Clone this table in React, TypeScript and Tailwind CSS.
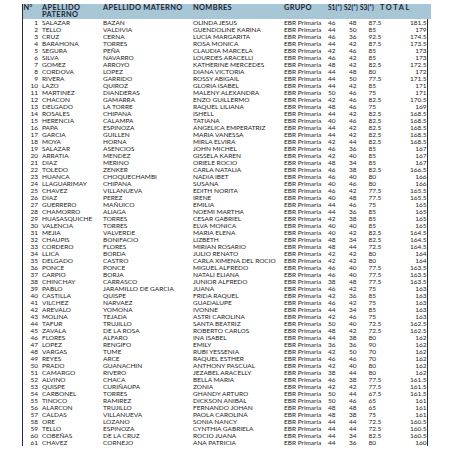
import React from "react";

type Row = [number, string, string, string, string, string, string, string];

const D: Row[] = [
  [1, "SALAZAR", "BAZAN", "OLINDA JESUS", "46", "48", "87.5", "181.5"],
  [2, "TELLO", "VALDIVIA", "GUENDOLINE KARINA", "44", "50", "85", "179"],
  [3, "CRUZ", "CERNA", "LUCIA MARGARITA", "46", "36", "92.5", "174.5"],
  [4, "BARAHONA", "TORRES", "ROSA MONICA", "44", "42", "87.5", "173.5"],
  [5, "SEGURA", "PEÑA", "CLAUDIA MARCELA", "42", "46", "85", "173"],
  [6, "SILVA", "NAVARRO", "LOURDES ARACELLI", "46", "42", "85", "173"],
  [7, "GOMEZ", "ARROYO", "KATHERINE MERCEDES", "48", "42", "82.5", "172.5"],
  [8, "CORDOVA", "LOPEZ", "DIANA VICTORIA", "44", "48", "80", "172"],
  [9, "RIVERA", "GARRIDO", "ROSSY ABIGAIL", "44", "50", "77.5", "171.5"],
  [10, "LAZO", "QUIROZ", "GLORIA ISABEL", "44", "42", "85", "171"],
  [11, "MARTINEZ", "DIANDERAS", "MALENY ALEXANDRA", "50", "46", "75", "171"],
  [12, "CHACON", "GAMARRA", "ENZO GUILLERMO", "42", "46", "82.5", "170.5"],
  [13, "DELGADO", "LA TORRE", "RAQUEL LILIANA", "48", "46", "75", "169"],
  [14, "ROSALES", "CHIPANA", "ISHELL", "44", "42", "82.5", "168.5"],
  [15, "HERENCIA", "CALAMPA", "TATIANA", "40", "46", "82.5", "168.5"],
  [16, "PAPA", "ESPINOZA", "ANGELICA EMPERATRIZ", "44", "42", "82.5", "168.5"],
  [17, "GARCIA", "GUILLEN", "MARIA VANESSA", "44", "42", "82.5", "168.5"],
  [18, "MOYA", "HORNA", "MIRLA ELVIRA", "42", "44", "82.5", "168.5"],
  [19, "SALAZAR", "ASENCIOS", "JOHN MICHEL", "46", "36", "85", "167"],
  [20, "ARRATIA", "MENDEZ", "GISSELA KAREN", "42", "40", "85", "167"],
  [21, "DIAZ", "MERINO", "ORIELE ROCIO", "48", "34", "85", "167"],
  [22, "TOLEDO", "ZENKER", "CARLA NATALIA", "46", "38", "82.5", "166.5"],
  [23, "HUANCA", "CHOQUECHAMBI", "NADIA IBET", "46", "40", "80", "166"],
  [24, "LLAGUARIMAY", "CHIPANA", "SUSANA", "40", "46", "80", "166"],
  [25, "CHAVEZ", "VILLANUEVA", "EDITH NORITA", "46", "42", "77.5", "165.5"],
  [26, "DIAZ", "PEREZ", "IRENE", "40", "48", "77.5", "165.5"],
  [27, "GUERRERO", "MAÑUICO", "EMILIA", "44", "46", "75", "165"],
  [28, "CHAMORRO", "ALIAGA", "NOEMI MARTHA", "44", "36", "85", "165"],
  [29, "HUASASQUICHE", "TORRES", "CESAR GABRIEL", "42", "38", "85", "165"],
  [30, "VALENCIA", "TORRES", "ELVA MONICA", "40", "40", "85", "165"],
  [31, "MEJIA", "VALVERDE", "MARIA ELENA", "40", "42", "82.5", "164.5"],
  [32, "CHAUPIS", "BONIFACIO", "LIZBETH", "48", "34", "82.5", "164.5"],
  [33, "CORDERO", "FLORES", "MIRIAN ROSARIO", "48", "44", "72.5", "164.5"],
  [34, "LLICA", "BORDA", "JULIO RENATO", "42", "42", "80", "164"],
  [35, "DELGADO", "CASTRO", "CARLA XIMENA DEL ROCIO", "42", "42", "80", "164"],
  [36, "PONCE", "PONCE", "MIGUEL ALFREDO", "46", "40", "77.5", "163.5"],
  [37, "CARPIO", "BORJA", "NATALI ELIANA", "46", "40", "77.5", "163.5"],
  [38, "CHINCHAY", "CARRASCO", "JUNIOR ALFREDO", "38", "48", "77.5", "163.5"],
  [39, "PABLO", "JARAMILLO DE GARCIA", "JUANA", "46", "42", "75", "163"],
  [40, "CASTILLA", "QUISPE", "FRIDA RAQUEL", "42", "36", "85", "163"],
  [41, "VILCHEZ", "NARVAEZ", "GUADALUPE", "46", "42", "75", "163"],
  [42, "AREVALO", "YOMONA", "IVONNE", "44", "34", "85", "163"],
  [43, "MOLINA", "TEJADA", "ASTRI CAROLINA", "42", "46", "75", "163"],
  [44, "TAFUR", "TRUJILLO", "SANTA BEATRIZ", "50", "40", "72.5", "162.5"],
  [45, "ZAVALA", "DE LA ROSA", "ROBERTO CARLOS", "48", "42", "72.5", "162.5"],
  [46, "FLORES", "ALFARO", "INA ISABEL", "44", "38", "80", "162"],
  [47, "LOPEZ", "RENGIFO", "EMILY", "36", "36", "90", "162"],
  [48, "VARGAS", "TUME", "RUBI YESSENIA", "42", "50", "70", "162"],
  [49, "REYES", "ARCE", "RAQUEL ESTHER", "46", "46", "70", "162"],
  [50, "PRADO", "GUANACHIN", "ANTHONY PASCUAL", "42", "40", "80", "162"],
  [51, "CAMARGO", "RIVERO", "JEZABEL ARACELLY", "38", "44", "80", "162"],
  [52, "ALVINO", "CHACA", "BELLA MARIA", "46", "38", "77.5", "161.5"],
  [53, "QUISPE", "CURIÑAUPA", "ZONIA", "42", "42", "77.5", "161.5"],
  [54, "CARBONEL", "TORRES", "GHANDY ARTURO", "50", "44", "67.5", "161.5"],
  [55, "TINOCO", "RAMIREZ", "DICKSON ANIBAL", "50", "46", "65", "161"],
  [56, "ALARCON", "TRUJILLO", "FERNANDO JOHAN", "48", "48", "65", "161"],
  [57, "CALDAS", "VILLANUEVA", "PAOLA CAROLINA", "48", "38", "75", "161"],
  [58, "ORE", "LOZANO", "SONIA NANCY", "44", "44", "72.5", "160.5"],
  [59, "TELLO", "ESPINOZA", "CYNTHIA GABRIELA", "44", "44", "72.5", "160.5"],
  [60, "COBEÑAS", "DE LA CRUZ", "ROCIO JUANA", "44", "34", "82.5", "160.5"],
  [61, "CHAVEZ", "CORNEJO", "ANA PATRICIA", "44", "36", "80", "160"],
];

const cols =
  "grid grid-cols-[19.5px_61px_90px_91px_44px_16px_16px_20px_48px]";

export default function App() {
  return (
    <div
      className="w-[452px] h-[452px] bg-white overflow-hidden pt-[3.5px] pl-[21.5px]"
      style={{ fontFamily: "Lato, 'Liberation Sans', sans-serif" }}
    >
      <div className="w-[409px]">
        <div
          className={`${cols} w-[409px] h-[15px] bg-[#a7c6d6] border-l border-[#2a2a2a] text-[7.4px] leading-[7.5px] font-bold tracking-[0.35px] text-[#1c2838] whitespace-nowrap`}
        >
          <div className="pl-[1px] tracking-normal">N°</div>
          <div>
            APELLIDO
            <br />
            PATERNO
          </div>
          <div>APELLIDO MATERNO</div>
          <div>NOMBRES</div>
          <div>GRUPO</div>
          <div className="text-[6.6px] tracking-normal">S1(*)</div>
          <div className="text-[6.6px] tracking-normal">S2(*)</div>
          <div className="text-[6.6px] tracking-normal">S3(*)</div>
          <div className="tracking-[1.6px]">TOTAL</div>
        </div>
        <div className="w-[406.5px] border-l border-r border-[#2a2a2a] text-[6.5px] leading-[7px] text-[#222] whitespace-nowrap">
          {D.map((r) => (
            <div key={r[0]} className={`${cols} h-[7px]`}>
              <div className="text-right pr-[4px]">{r[0]}</div>
              <div>{r[1]}</div>
              <div>{r[2]}</div>
              <div>{r[3]}</div>
              <div>EBR Primaria</div>
              <div>{r[4]}</div>
              <div className="pl-[5px]">{r[5]}</div>
              <div className="pl-[8.5px]">{r[6]}</div>
              <div className="text-right pr-[1.5px]">{r[7]}</div>
            </div>
          ))}
        </div>
      </div>
    </div>
  );
}
